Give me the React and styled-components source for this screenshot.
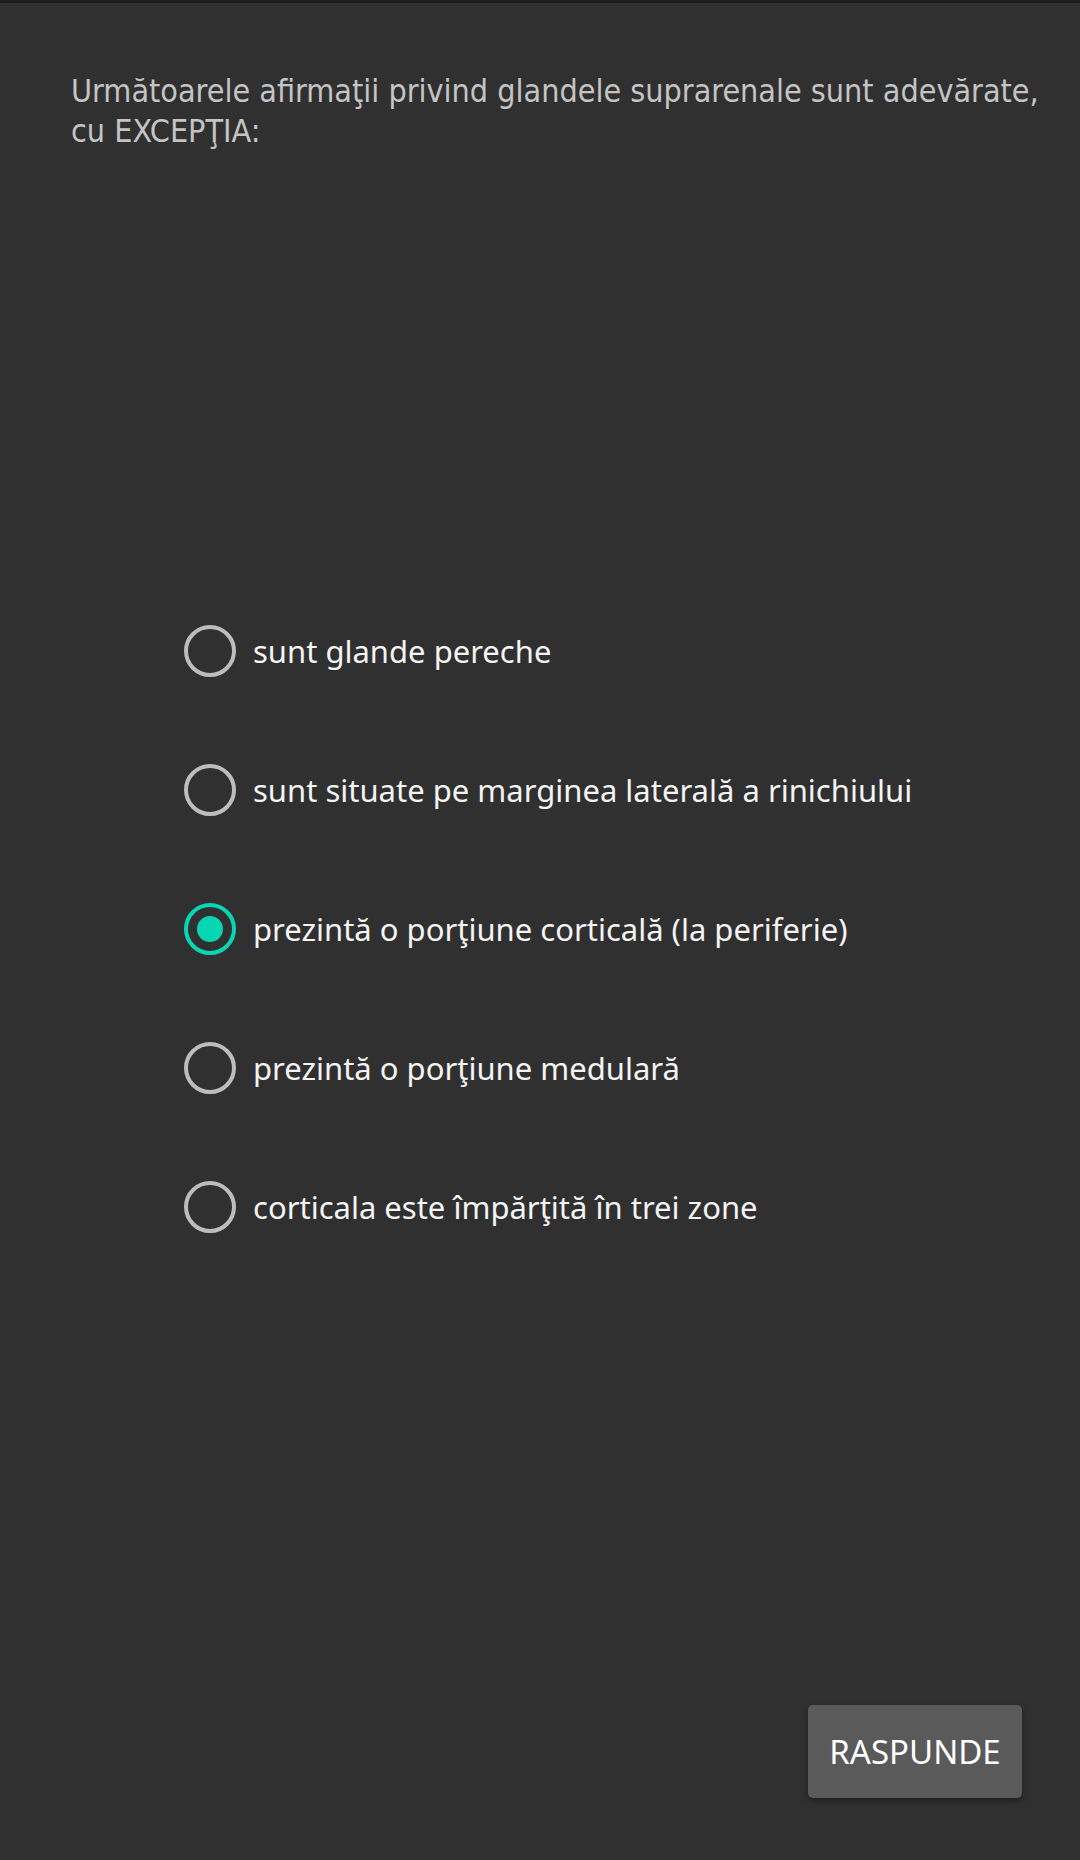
import React, { useState } from "react";
import styled, { createGlobalStyle } from "styled-components";

const GlobalStyle = createGlobalStyle`
  html, body {
    margin: 0;
    padding: 0;
    background: #303030;
  }
  * { box-sizing: border-box; }
`;

const options = [
  "sunt glande pereche",
  "sunt situate pe marginea laterală a rinichiului",
  "prezintă o porţiune corticală (la periferie)",
  "prezintă o porţiune medulară",
  "corticala este împărţită în trei zone",
];

const App = () => {
  const [selected, setSelected] = useState(2);
  return (
    <>
      <GlobalStyle />
      <Screen>
        <Question>
          Următoarele afirmaţii privind glandele suprarenale sunt adevărate,
          cu EXCEPŢIA:
        </Question>
        <OptionList>
          {options.map((text, i) => (
            <OptionRow key={text} onClick={() => setSelected(i)}>
              <Radio checked={selected === i} />
              <OptionText>{text}</OptionText>
            </OptionRow>
          ))}
        </OptionList>
        <Footer>
          <AnswerButton>RASPUNDE</AnswerButton>
        </Footer>
      </Screen>
    </>
  );
};

export default App;

const Screen = styled.div`
  display: flex;
  flex-direction: column;
  height: 1860px;
  background: #303030;
  border-top: 3px solid #1d1d1d;
`;

const Question = styled.p`
  margin: 0;
  padding: 68px 16px 0 71px;
  font-family: "DejaVu Sans Condensed", "DejaVu Sans", sans-serif;
  font-size: 32px;
  line-height: 40px;
  color: #c4c4c4;
`;

const OptionList = styled.div`
  display: flex;
  flex-direction: column;
  margin-top: 430px;
  padding-left: 184px;
`;

const OptionRow = styled.label`
  display: flex;
  align-items: center;
  height: 139px;
  cursor: pointer;
`;

const Radio = styled.span`
  position: relative;
  flex-shrink: 0;
  width: 52px;
  height: 52px;
  border-radius: 50%;
  border: 4px solid ${(p) => (p.checked ? "#06d6b3" : "#bdbdbd")};

  &::after {
    content: "";
    display: ${(p) => (p.checked ? "block" : "none")};
    position: absolute;
    left: 50%;
    top: 50%;
    width: 26px;
    height: 26px;
    margin: -13px 0 0 -13px;
    border-radius: 50%;
    background: #06d6b3;
  }
`;

const OptionText = styled.span`
  margin-left: 17px;
  font-family: "Noto Sans", sans-serif;
  font-size: 31px;
  color: #f4f4f4;
`;

const Footer = styled.div`
  flex: 1;
  display: flex;
  justify-content: flex-end;
  align-items: flex-end;
  padding: 0 58px 62px 0;
`;

const AnswerButton = styled.button`
  width: 214px;
  height: 93px;
  border: none;
  border-radius: 5px;
  background: #5a5a5b;
  box-shadow: 0 3px 6px rgba(0, 0, 0, 0.35);
  font-family: "Noto Sans", sans-serif;
  font-size: 33px;
  color: #ffffff;
  cursor: pointer;
`;
